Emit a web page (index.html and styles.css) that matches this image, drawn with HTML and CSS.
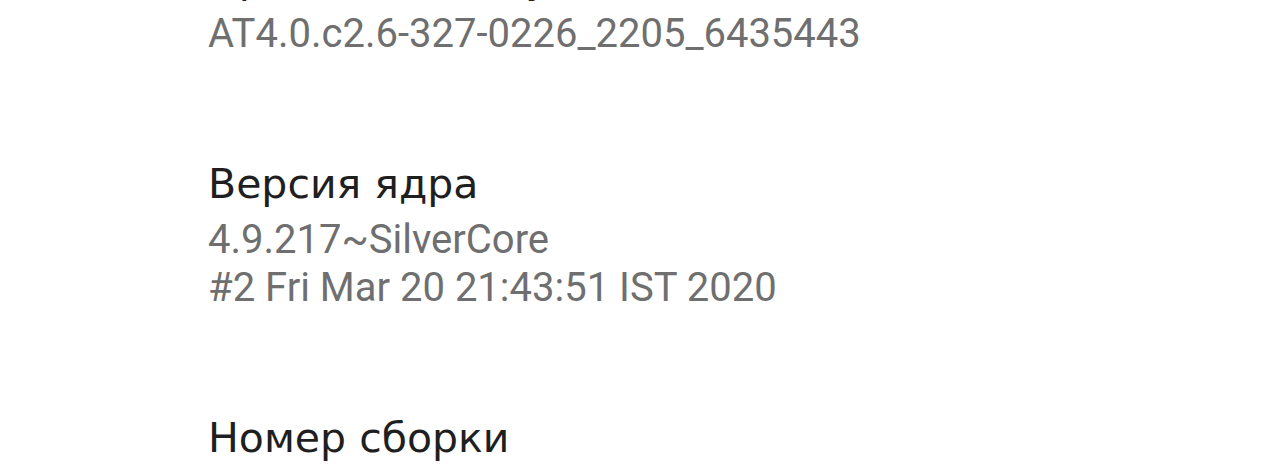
FILE: index.html
```html
<!DOCTYPE html>
<html lang="ru">
<head>
<meta charset="utf-8">
<title>О телефоне</title>
<link rel="stylesheet" href="styles.css">
</head>
<body>
<div class="list">
  <div class="item">
    <div class="title">Прошивка модуля связи</div>
    <div class="summary">AT4.0.c2.6-327-0226_2205_6435443</div>
  </div>
  <div class="item">
    <div class="title">Версия ядра</div>
    <div class="summary">4.9.217~SilverCore<br>#2 Fri Mar 20 21:43:51 IST 2020</div>
  </div>
  <div class="item">
    <div class="title">Номер сборки</div>
  </div>
</div>
</body>
</html>
```
FILE: styles.css
```css
html, body {
  margin: 0;
  padding: 0;
  background: #ffffff;
}
body {
  width: 1280px;
  height: 466px;
  overflow: hidden;
}
.list {
  margin-top: -98px;
  display: flex;
  flex-direction: column;
}
.item {
  padding: 50px 0 50px 208px;
}
.title {
  font-family: "DejaVu Sans", "Open Sans", sans-serif;
  font-size: 41px;
  line-height: 52px;
  color: #1f1f1f;
}
.summary {
  margin-top: 6px;
  font-family: "Roboto", "Liberation Sans", sans-serif;
  font-size: 40px;
  line-height: 48px;
  color: #6f6f6f;
}
```
